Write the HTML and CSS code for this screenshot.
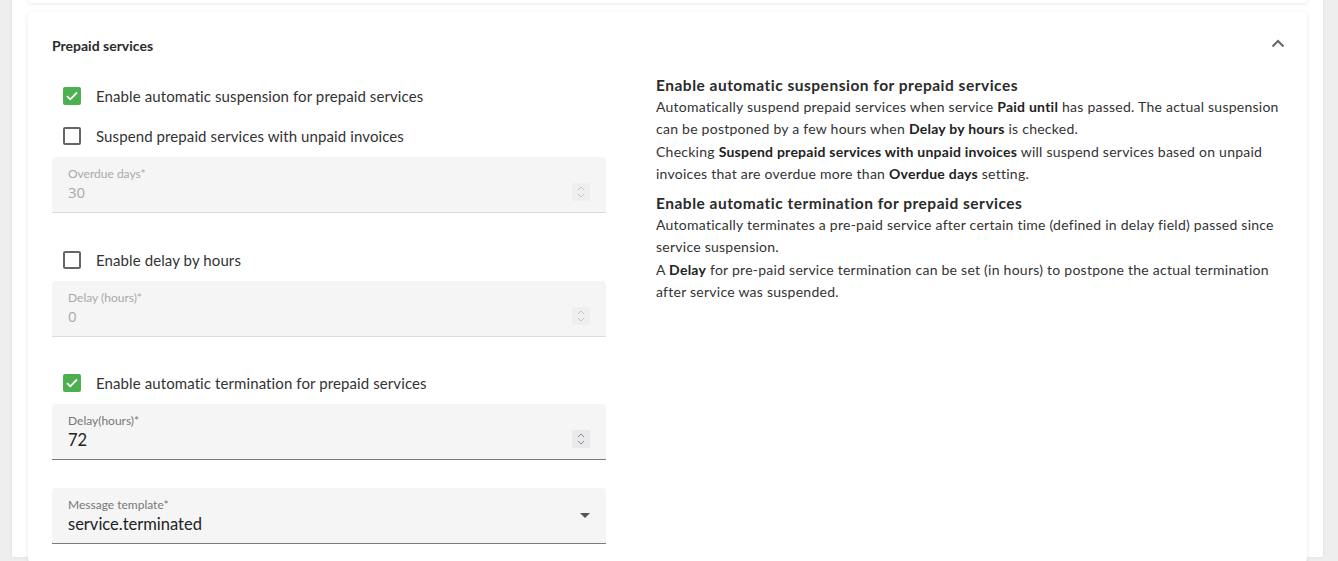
FILE: index.html
```html
<!DOCTYPE html>
<html lang="en">
<head>
  <meta charset="UTF-8" />
  <title>Prepaid services</title>
  <link rel="stylesheet" href="styles.css">
</head>
<body>
  <div class="shell">
    <div class="card card-prev"></div>

    <section class="card">
      <header class="card-head">
        <h2>Prepaid services</h2>
        <svg class="collapse" width="14" height="9" viewBox="0 0 14 9">
          <path d="M1.5 7.5 L7 2 L12.5 7.5" fill="none" stroke="#666" stroke-width="2"/>
        </svg>
      </header>

      <div class="card-body">
        <div class="form-col">
          <label class="check">
            <span class="box on"><svg width="12" height="10" viewBox="0 0 12 10"><path d="M1 5.2 L4.3 8.3 L11 1.5" fill="none" stroke="#fff" stroke-width="1.8"/></svg></span>
            Enable automatic suspension for prepaid services
          </label>
          <label class="check">
            <span class="box"></span>
            Suspend prepaid services with unpaid invoices
          </label>
          <div class="field disabled">
            <span class="field-label">Overdue days*</span>
            <span class="field-value">30</span>
            <span class="spin"><svg width="8" height="12" viewBox="0 0 8 12"><path d="M1 4 L4 1 L7 4 M1 8 L4 11 L7 8" fill="none" stroke="currentColor" stroke-width="1"/></svg></span>
          </div>

          <label class="check after-field">
            <span class="box"></span>
            Enable delay by hours
          </label>
          <div class="field disabled">
            <span class="field-label">Delay (hours)*</span>
            <span class="field-value">0</span>
            <span class="spin"><svg width="8" height="12" viewBox="0 0 8 12"><path d="M1 4 L4 1 L7 4 M1 8 L4 11 L7 8" fill="none" stroke="currentColor" stroke-width="1"/></svg></span>
          </div>

          <label class="check after-field">
            <span class="box on"><svg width="12" height="10" viewBox="0 0 12 10"><path d="M1 5.2 L4.3 8.3 L11 1.5" fill="none" stroke="#fff" stroke-width="1.8"/></svg></span>
            Enable automatic termination for prepaid services
          </label>
          <div class="field">
            <span class="field-label">Delay(hours)*</span>
            <span class="field-value">72</span>
            <span class="spin"><svg width="8" height="12" viewBox="0 0 8 12"><path d="M1 4 L4 1 L7 4 M1 8 L4 11 L7 8" fill="none" stroke="currentColor" stroke-width="1"/></svg></span>
          </div>

          <div class="field select">
            <span class="field-label">Message template*</span>
            <span class="field-value">service.terminated</span>
            <span class="caret"></span>
          </div>
        </div>

        <div class="help-col">
          <h3>Enable automatic suspension for prepaid services</h3>
          <p>Automatically suspend prepaid services when service <b>Paid until</b> has passed. The actual suspension can be postponed by a few hours when <b>Delay by hours</b> is checked.</p>
          <p>Checking <b>Suspend prepaid services with unpaid invoices</b> will suspend services based on unpaid invoices that are overdue more than <b>Overdue days</b> setting.</p>

          <h3>Enable automatic termination for prepaid services</h3>
          <p>Automatically terminates a pre-paid service after certain time (defined in delay field) passed since service suspension.</p>
          <p>A <b>Delay</b> for pre-paid service termination can be set (in hours) to postpone the actual termination after service was suspended.</p>
        </div>
      </div>
    </section>
  </div>
</body>
</html>
```

FILE: styles.css
```css
body {
  margin: 0;
  background: #eeeeee;
  font-family: 'Lato', 'Open Sans', sans-serif;
  color: #333;
  height: 561px;
  overflow: hidden;
}

.shell {
  margin: 0 15px 0 12px;
  padding: 0 16px;
  background: #fff;
  height: 561px;
  box-shadow: 0 0 3px rgba(0, 0, 0, 0.08);
}

.card {
  background: #fff;
  border-radius: 4px;
  box-shadow: 0 1px 4px rgba(0, 0, 0, 0.09);
}

.card-prev {
  height: 3px;
  margin-top: -4px;
  padding-top: 4px;
  border-radius: 0 0 4px 4px;
}

section.card {
  margin-top: 9px;
  padding: 24px 24px 18px;
}

.card-head {
  display: flex;
  justify-content: space-between;
  align-items: center;
  height: 18px;
}

.card-head h2 {
  margin: 0;
  font-size: 14px;
  font-weight: 700;
  color: #2b2b2b;
}

.collapse {
  margin-right: -2px;
  margin-top: -4px;
}

.card-body {
  display: flex;
  gap: 50px;
  margin-top: 22px;
}

.form-col {
  width: 554px;
  flex-shrink: 0;
}

.check {
  display: flex;
  align-items: center;
  gap: 15px;
  height: 40px;
  padding-left: 11px;
  font-size: 15px;
  letter-spacing: 0.1px;
  color: #333;
}

.check.after-field {
  margin-top: 26.5px;
}

.box {
  width: 18px;
  height: 18px;
  box-sizing: border-box;
  border: 2px solid #666;
  border-radius: 2px;
  display: flex;
  align-items: center;
  justify-content: center;
}

.box.on {
  background: #4caf50;
  border-color: #4caf50;
}

.field {
  position: relative;
  height: 56px;
  box-sizing: border-box;
  margin-top: 1px;
  padding: 10px 16px 0;
  background: #f5f5f5;
  border-radius: 4px 4px 0 0;
  border-bottom: 1px solid #7b7b7b;
  display: flex;
  flex-direction: column;
}

.field.disabled {
  border-bottom-color: #dcdcdc;
}

.field-label {
  font-size: 12px;
  color: #777;
  line-height: 14px;
}

.field-value {
  font-size: 16.5px;
  color: #222;
  line-height: 22px;
  margin-top: 1px;
}

.field.disabled .field-label,
.field.disabled .field-value {
  color: #a9a9a9;
}

.field.disabled .field-value {
  font-family: 'Open Sans', sans-serif;
  font-size: 15px;
  margin-top: 0;
}

.spin {
  position: absolute;
  right: 16px;
  top: 26px;
  width: 18px;
  height: 18px;
  background: #e9e9eb;
  color: #888;
  display: flex;
  align-items: center;
  justify-content: center;
}

.field.disabled .spin {
  color: #c4c4c4;
  background: #efefef;
}

.field.select {
  margin-top: 28px;
}

.caret {
  position: absolute;
  right: 16px;
  top: 25px;
  width: 0;
  height: 0;
  border-left: 5px solid transparent;
  border-right: 5px solid transparent;
  border-top: 5px solid #555;
}

.help-col {
  flex: 1;
  margin-top: -1px;
}

.help-col h3 {
  margin: 0;
  font-size: 15.5px;
  font-weight: 700;
  letter-spacing: 0.5px;
  color: #2b2b2b;
  line-height: 21px;
}

.help-col p {
  margin: 0;
  font-size: 14px;
  letter-spacing: 0.25px;
  line-height: 22.3px;
  color: #333;
}

.help-col p + h3 {
  margin-top: 8px;
}

.help-col b {
  font-weight: 700;
  color: #222;
}
```
